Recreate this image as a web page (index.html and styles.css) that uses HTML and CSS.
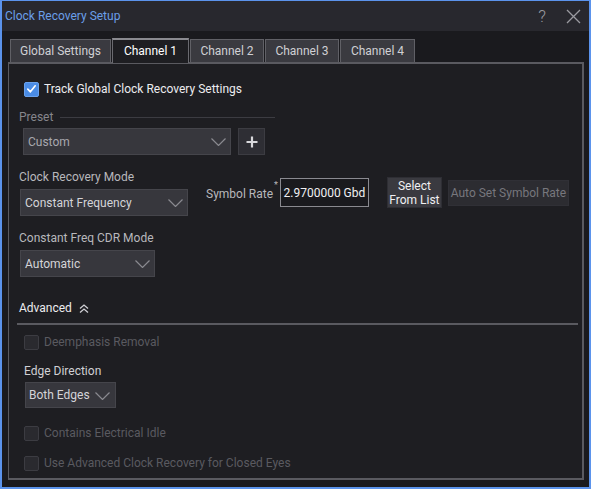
FILE: index.html
```html
<!DOCTYPE html>
<html>
<head>
<meta charset="utf-8">
<link rel="stylesheet" href="styles.css">
</head>
<body>
<div class="window">
  <div class="titlebar">
    <span class="title">Clock Recovery Setup</span>
    <div class="tb-icons">
      <span class="help">?</span>
      <svg class="close" width="15" height="15" viewBox="0 0 15 15"><path d="M1 1 L14 14 M14 1 L1 14" stroke="#9a9aa0" stroke-width="1.3" fill="none"/></svg>
    </div>
  </div>
  <div class="body">
    <div class="tabs">
      <div class="tab w1">Global Settings</div>
      <div class="tab active w2">Channel 1</div>
      <div class="tab w3">Channel 2</div>
      <div class="tab w3">Channel 3</div>
      <div class="tab w4">Channel 4</div>
    </div>
    <div class="panel">
      <label class="check track">
        <span class="box checked"><svg width="14" height="14" viewBox="0 0 14 14"><path d="M3 7.2 L5.8 10 L11 3.6" stroke="#fff" stroke-width="1.8" fill="none" stroke-linecap="round" stroke-linejoin="round"/></svg></span>
        <span class="ctext bright">Track Global Clock Recovery Settings</span>
      </label>

      <div class="preset-head">
        <span class="muted">Preset</span>
        <span class="rule"></span>
      </div>
      <div class="preset-row">
        <div class="dropdown custom"><span class="dim">Custom</span><svg class="chev" width="15" height="8" viewBox="0 0 15 8"><path d="M0.5 0.5 L7.5 7.5 L14.5 0.5" stroke="#8a8a90" stroke-width="1.2" fill="none"/></svg></div>
        <div class="plus"><svg width="12" height="12" viewBox="0 0 12 12"><path d="M6 0.5 V11.5 M0.5 6 H11.5" stroke="#d8d8dc" stroke-width="2.2"/></svg></div>
      </div>

      <div class="mode-row">
        <div class="col">
          <div class="label">Clock Recovery Mode</div>
          <div class="dropdown mode"><span>Constant Frequency</span><svg class="chev" width="15" height="8" viewBox="0 0 15 8"><path d="M0.5 0.5 L7.5 7.5 L14.5 0.5" stroke="#8a8a90" stroke-width="1.2" fill="none"/></svg></div>
        </div>
        <div class="sym">
          <span class="label sym-label">Symbol Rate<sup>*</sup></span>
          <div class="input">2.9700000 Gbd</div>
          <div class="btn select">Select<br>From List</div>
          <div class="btn auto">Auto Set Symbol Rate</div>
        </div>
      </div>

      <div class="col cdr">
        <div class="label">Constant Freq CDR Mode</div>
        <div class="dropdown autom"><span>Automatic</span><svg class="chev" width="15" height="8" viewBox="0 0 15 8"><path d="M0.5 0.5 L7.5 7.5 L14.5 0.5" stroke="#8a8a90" stroke-width="1.2" fill="none"/></svg></div>
      </div>

      <div class="adv-head">
        <span class="bright">Advanced</span>
        <svg width="10" height="9" viewBox="0 0 10 9"><path d="M1 4.5 L5 1 L9 4.5 M1 8.5 L5 5 L9 8.5" stroke="#cfcfd4" stroke-width="1.3" fill="none"/></svg>
      </div>
      <div class="adv-rule"></div>

      <div class="adv">
        <label class="check"><span class="box"></span><span class="ctext off">Deemphasis Removal</span></label>
        <div class="label edge-label">Edge Direction</div>
        <div class="dropdown edge"><span>Both Edges</span><svg class="chev" width="15" height="8" viewBox="0 0 15 8"><path d="M0.5 0.5 L7.5 7.5 L14.5 0.5" stroke="#8a8a90" stroke-width="1.2" fill="none"/></svg></div>
        <label class="check idle"><span class="box"></span><span class="ctext off">Contains Electrical Idle</span></label>
        <label class="check closed"><span class="box"></span><span class="ctext off">Use Advanced Clock Recovery for Closed Eyes</span></label>
      </div>
    </div>
  </div>
</div>
</body>
</html>
```

FILE: styles.css
```css
* { box-sizing: border-box; }
html, body { margin: 0; padding: 0; }
body {
  width: 591px;
  height: 489px;
  background: #1a1a1e;
  font-family: Roboto, "Liberation Sans", sans-serif;
  font-size: 12px;
  overflow: hidden;
}
.window {
  width: 591px;
  height: 489px;
  border: 2px solid #5b93ec;
  border-top-width: 1px;
  background: #1a1a1e;
  display: flex;
  flex-direction: column;
}
.titlebar {
  height: 30px;
  background: #28282e;
  display: flex;
  align-items: center;
  justify-content: space-between;
  padding: 0 8px 0 3px;
}
.title {
  color: #6a9fe8;
  font-size: 12px;
  margin-top: -1px;
}
.tb-icons { display: flex; align-items: center; gap: 20px; }
.help { color: #9a9aa0; font-size: 17px; font-weight: 300; }
.close { margin-top: 1px; }
.body { flex: 1; padding: 7px 5px 7px 6px; display: flex; flex-direction: column; }
.tabs { display: flex; gap: 1px; padding-left: 2px; align-items: flex-end; height: 24px; }
.tab {
  height: 23px;
  background: #3a3a40;
  border: 1px solid #606066;
  border-bottom: none;
  color: #d0d0d4;
  font-size: 12px;
  display: flex;
  align-items: center;
  justify-content: center;
}
.tab.active {
  height: 25px;
  background: #1e1e22;
  color: #ffffff;
  border-color: #6a6a70;
  border-top: 2px solid #8a8a90;
  position: relative;
  top: 1px;
  z-index: 1;
  padding-bottom: 2px;
}
.w1 { width: 101px; }
.w2 { width: 77px; }
.w3 { width: 74px; }
.w4 { width: 75px; }
.panel {
  flex: 1;
  background: #1e1e22;
  border: 2px solid #5a5a60;
  border-left-width: 1px;
  padding: 17px 0 0 10px;
  display: flex;
  flex-direction: column;
}
.check { display: flex; align-items: center; gap: 5px; height: 16px; }
.box {
  width: 15px;
  height: 15px;
  border-radius: 2px;
  border: 1px solid #3c3c42;
  background: #2a2a2f;
  display: flex;
  align-items: center;
  justify-content: center;
}
.box.checked { background: #4a8ce6; border-color: #6aa2ee; }
.track { margin-left: 5px; }
.bright { color: #ececef; font-size: 12px; }
.muted { color: #86868c; font-size: 12px; }
.dim { color: #a8a8ae; }
.off { color: #5a5a60; font-size: 12px; }
.ctext { line-height: 16px; }
.preset-head { display: flex; align-items: center; gap: 7px; margin-top: 13px; height: 14px; }
.rule { width: 215px; height: 1px; background: #3c3c42; margin-top: 1px; }
.preset-row { display: flex; gap: 7px; margin-top: 4px; margin-left: 4px; }
.dropdown {
  height: 27px;
  background: #37373d;
  border: 1px solid #45454b;
  display: flex;
  align-items: center;
  justify-content: space-between;
  padding: 0 4px 0 4px;
  color: #d4d4d8;
  font-size: 12px;
}
.dropdown.custom { width: 208px; }
.dropdown.mode { width: 168px; }
.dropdown.autom { width: 135px; }
.dropdown.edge { width: 91px; height: 26px; padding-left: 3px; padding-right: 5px; gap: 4px; }
.chev { margin-top: 1px; flex: none; }
.plus {
  width: 27px;
  height: 27px;
  background: #2e2e34;
  border: 1px solid #3c3c42;
  display: flex;
  align-items: center;
  justify-content: center;
}
.label { color: #b8b8bc; font-size: 12px; line-height: 14px; }
.col { display: flex; flex-direction: column; gap: 5px; }
.mode-row { display: flex; margin-top: 15px; margin-left: 0; }
.mode-row .dropdown { margin-left: 1px; }
.sym { display: flex; align-items: center; margin-top: 7px; margin-left: 18px; height: 31px; }
.sym-label { position: relative; margin-top: 2px; white-space: nowrap; }
.sym-label sup { font-size: 9px; position: relative; top: -2px; margin-left: 1px; vertical-align: top; line-height: 0; }
.input {
  width: 89px;
  height: 29px;
  border: 1px solid #8a8a90;
  background: #1a1a1e;
  color: #f0f0f2;
  font-size: 12px;
  display: flex;
  align-items: center;
  justify-content: center;
  margin-left: 2px;
}
.btn {
  display: flex;
  align-items: center;
  justify-content: center;
  text-align: center;
  font-size: 12px;
  white-space: nowrap;
}
.select {
  width: 55px;
  height: 31px;
  background: #3a3a40;
  color: #f0f0f2;
  line-height: 14px;
  margin-left: 18px;
  border: 1px solid #2e2e34;
}
.auto {
  width: 121px;
  height: 26px;
  background: #2c2c31;
  color: #77777d;
  margin-left: 6px;
  border: 1px solid #303036;
}
.cdr { margin-top: 15px; margin-left: 0; }
.cdr .dropdown { margin-left: 1px; }
.adv-head { display: flex; align-items: center; gap: 7px; margin-top: 24px; }
.adv-rule { height: 2px; background: #5a5a60; margin-top: 8px; margin-left: -2px; margin-right: 4px; }
.adv { display: flex; flex-direction: column; padding-left: 5px; margin-top: 9px; }
.edge-label { margin-top: 14px; color: #d0d0d4; }
.edge { margin-top: 4px; margin-left: 1px; }
.idle { margin-top: 17px; }
.closed { margin-top: 14px; }
```
